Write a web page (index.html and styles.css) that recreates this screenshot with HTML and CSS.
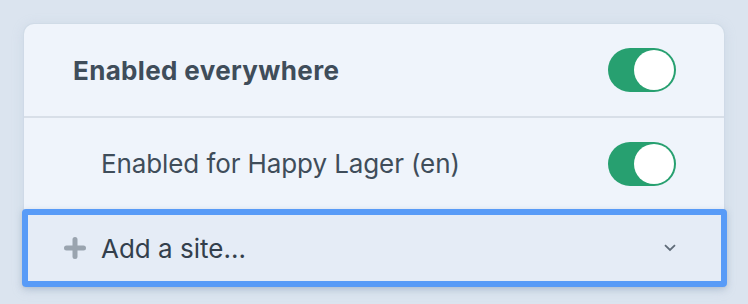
FILE: index.html
```html
<!DOCTYPE html>
<html>
<head>
<meta charset="utf-8">
<link rel="stylesheet" href="styles.css">
</head>
<body>
<div class="page">
  <div class="card">
    <div class="row row-main">
      <span class="label label-bold">Enabled everywhere</span>
      <span class="toggle"><span class="knob"></span></span>
    </div>
    <div class="row row-sub">
      <span class="label">Enabled for Happy Lager (en)</span>
      <span class="toggle"><span class="knob"></span></span>
    </div>
    <div class="select">
      <svg class="plus" width="22" height="22" viewBox="0 0 22 22"><path d="M11 2.5v17M2.5 11h17" stroke="#9aa4af" stroke-width="5" stroke-linecap="round" fill="none"/></svg>
      <span class="select-text">Add a site...</span>
      <svg class="chev" width="12" height="8" viewBox="0 0 12 8"><path d="M1 1.2l5 4.8 5-4.8" stroke="#5f6b78" stroke-width="1.8" fill="none"/></svg>
    </div>
  </div>
</div>
</body>
</html>
```

FILE: styles.css
```css
html, body {
  margin: 0;
  padding: 0;
}
body {
  width: 748px;
  height: 304px;
  overflow: hidden;
  background: #dbe4ef;
  font-family: Inter, "Noto Sans", sans-serif;
  color: #3f4d5a;
}
.page {
  padding: 24px 24px 0 24px;
}
.card {
  background: #eff4fb;
  border-radius: 10px 10px 0 0;
  box-shadow: 0 0 0 1px rgba(205, 216, 228, 0.6), 0 2px 12px rgba(170, 188, 208, 0.35);
  display: flex;
  flex-direction: column;
}
.row {
  display: flex;
  align-items: center;
  justify-content: space-between;
  padding-right: 48px;
}
.row-main {
  height: 92px;
  padding-left: 49px;
  border-bottom: 2px solid #d8dfe8;
}
.row-sub {
  height: 91px;
  padding-left: 77px;
}
.label {
  font-size: 26px;
  letter-spacing: -0.1px;
}
.label-bold {
  font-weight: 700;
  letter-spacing: 0.35px;
}
.toggle {
  width: 68px;
  height: 44px;
  border-radius: 22px;
  background: #27a070;
  display: flex;
  align-items: center;
  justify-content: flex-end;
  padding-right: 2px;
  box-sizing: border-box;
}
.knob {
  width: 40px;
  height: 40px;
  border-radius: 50%;
  background: #ffffff;
}
.select {
  height: 66px;
  margin: 0 -3px 0 -2px;
  border: 6px solid #589bf7;
  border-radius: 4px;
  background: #e5ecf6;
  display: flex;
  align-items: center;
  padding-left: 36px;
  padding-right: 45px;
  box-shadow: 0 2px 6px rgba(120, 140, 165, 0.35);
}
.plus {
  flex: none;
}
.select-text {
  font-size: 26px;
  color: #333f4c;
  margin-left: 15px;
  flex: 1;
}
.chev {
  flex: none;
}
```
